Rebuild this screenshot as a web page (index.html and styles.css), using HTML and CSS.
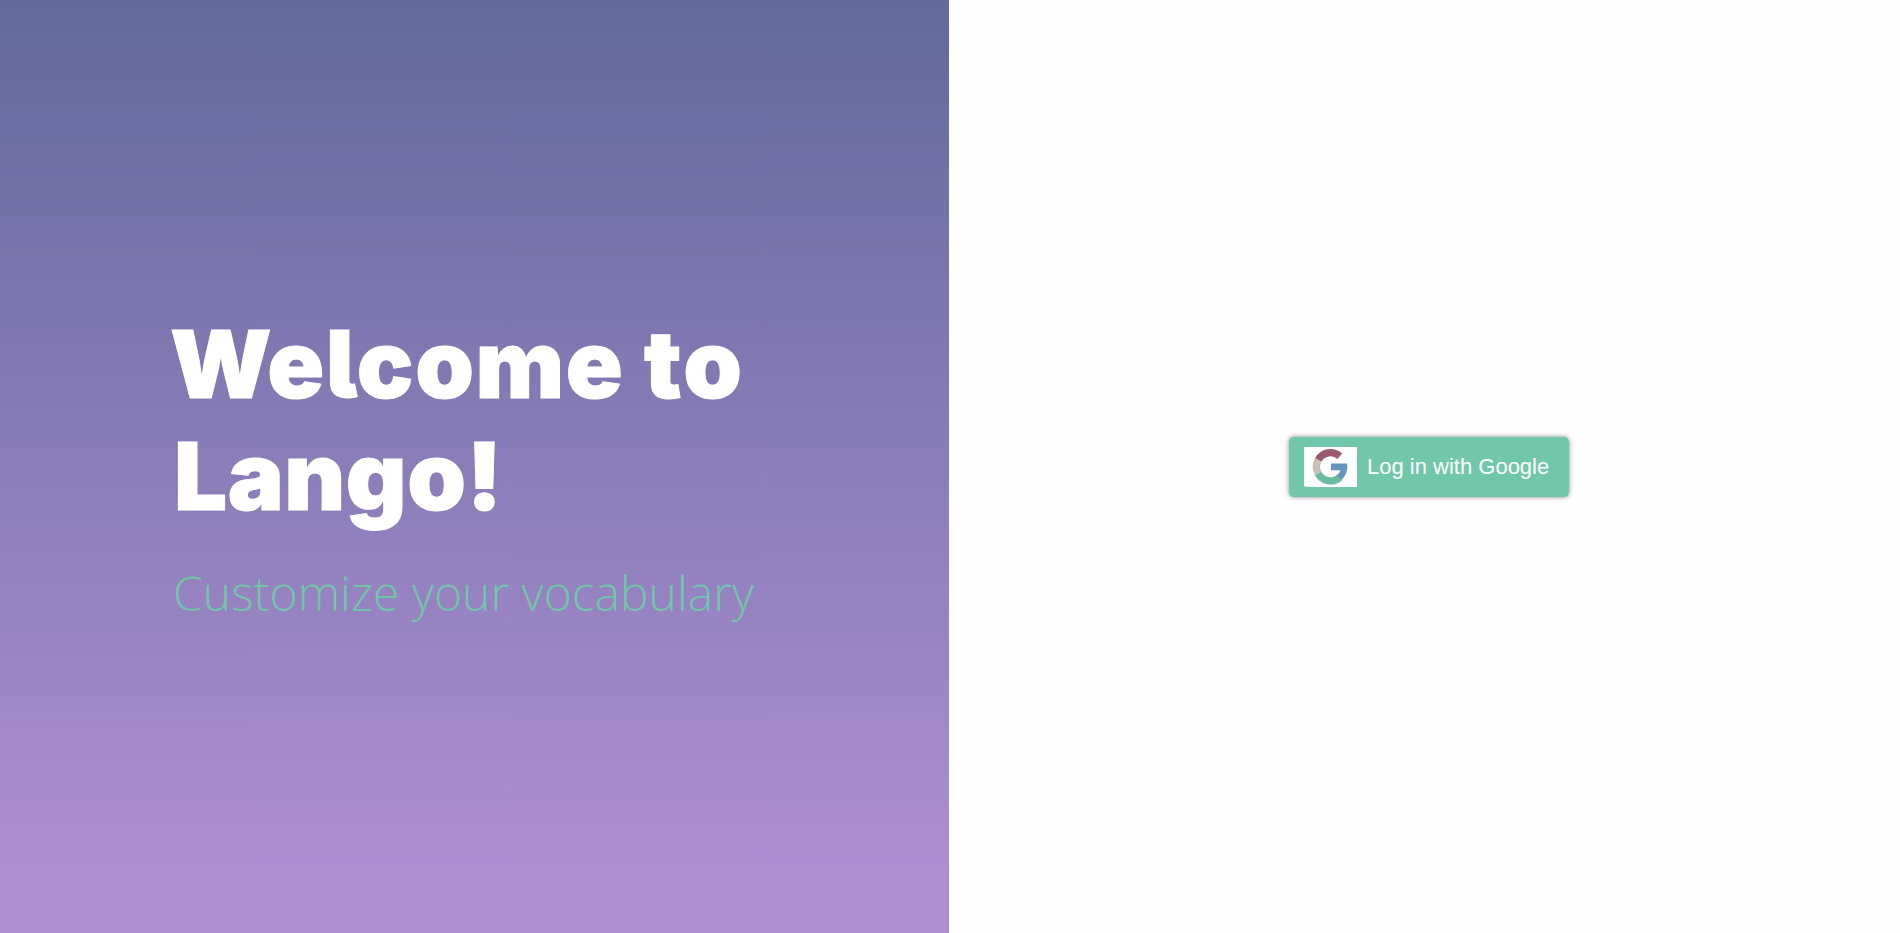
FILE: index.html
```html
<!DOCTYPE html>
<html lang="en">
<head>
<meta charset="utf-8">
<title>Lango</title>
<link rel="stylesheet" href="styles.css">
</head>
<body>
<main class="page">
  <section class="hero">
    <h1 class="title"><span class="word-welcome"><span class="initial">W</span>elcome</span> <span class="word-to">to</span><br><span class="word-lango">Lango!</span></h1>
    <p class="tagline">Customize your vocabulary</p>
  </section>
  <section class="login">
    <button class="google-button" type="button">
      <svg class="google-logo" width="53" height="40" viewBox="0 0 53 40" aria-hidden="true">
        <rect width="53" height="40" fill="#fff"/>
        <path d="M0 39.5H5" stroke="#d5e3dc"/>
        <g fill="none" stroke-width="7.300">
          <path d="M14.2 13A14 14 0 0 1 35.8 9.3" stroke="#9b5a71"/>
          <path d="M14.2 26.5A14 14 0 0 1 14.2 13" stroke="#cbbfb5"/>
          <path d="M36 30.2A14 14 0 0 1 14.2 26.5" stroke="#69bd9c"/>
        </g>
        <path d="M27 16.4H43.2C44 22.5 42 28.600 37.900 32.600L32.600 28.400C34.600 27 35.800 25.300 36.400 23.200H27Z" fill="#6695bd"/>
      </svg>
      <span class="button-label">Log in with Google</span>
    </button>
  </section>
</main>
</body>
</html>
```
FILE: styles.css
```css
body {
  margin: 0;
  background: #fefefe;
}

.page {
  display: grid;
  grid-template-columns: 949px 1fr;
  height: 100vh;
}

.hero {
  box-sizing: border-box;
  padding: 308px 0 0 173px;
  background: linear-gradient(#616a9b, #af8ed2 94%);
}

.title {
  margin: 0;
  color: #fff;
  font: 900 94px/112px Inter, sans-serif;
  font-feature-settings: "cv05" 1;
  -webkit-text-stroke: 1px #fff;
  white-space: nowrap;
}

.word-welcome {
  margin-left: -3px;
  letter-spacing: 1.6px;
}

.initial {
  letter-spacing: -4.5px;
}

.word-to {
  margin-left: 1px;
  letter-spacing: 2.5px;
}

.word-lango {
  margin-left: 1px;
  letter-spacing: 0.5px;
}

.tagline {
  margin: 28px 0 0;
  color: #71c6a9;
  font: 300 48px/66px "Open Sans", sans-serif;
  white-space: nowrap;
}

.login {
  display: flex;
  align-items: center;
  justify-content: center;
  padding-left: 9px;
}

.google-button {
  display: flex;
  align-items: center;
  gap: 10px;
  box-sizing: border-box;
  width: 280px;
  height: 60px;
  padding: 0 15px;
  border: 0;
  border-radius: 5px;
  background: #71c7aa;
  box-shadow: 0 0 5px rgba(45, 35, 70, 0.55);
  color: #fff;
  font: 22px "Liberation Sans", Arial, sans-serif;
  white-space: nowrap;
}

.google-logo {
  flex: none;
}
```
